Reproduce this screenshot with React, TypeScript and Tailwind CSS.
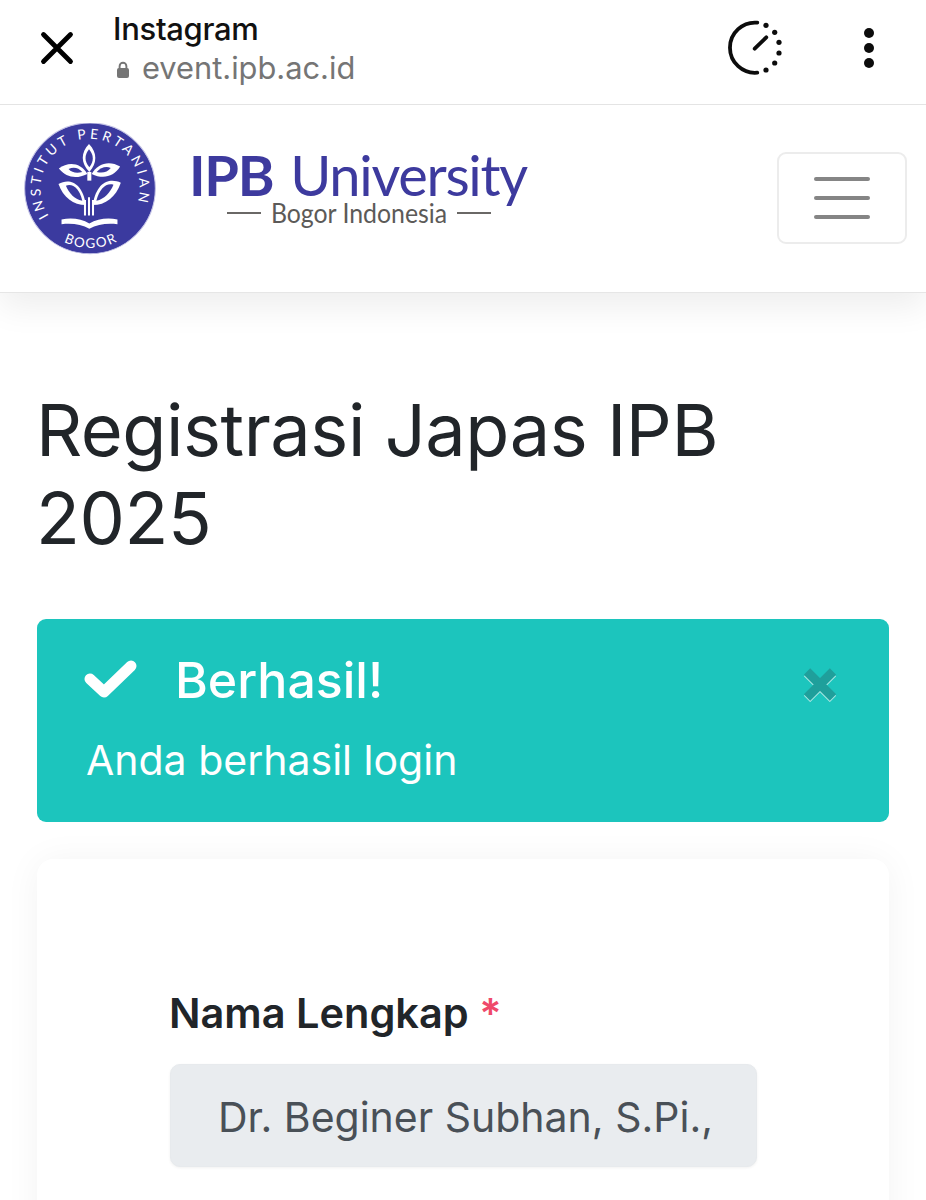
import React from 'react'

function Emblem() {
  return (
    <svg width="134" height="134" viewBox="40 40 400 400" className="shrink-0 -mt-[17px]">
      <defs>
        <path id="topArc" d="M 117 317 A 148 148 0 1 1 366 313" />
        <path id="bottomArc" d="M 158 393 A 178 178 0 0 0 322 393" />
      </defs>
      <circle cx="240" cy="235" r="195" fill="#3b3a9f" stroke="#c4c3e6" strokeWidth="3" />
      <text fill="#fff" fontFamily="Lato, sans-serif" fontSize="41" letterSpacing="10.5">
        <textPath href="#topArc">INSTITUT PERTANIAN</textPath>
      </text>
      <text fill="#fff" fontFamily="Lato, sans-serif" fontSize="40" letterSpacing="5">
        <textPath href="#bottomArc" startOffset="4">BOGOR</textPath>
      </text>
      {/* top leaf */}
      <path d="M237 103 C262 128 262 160 238 186 C212 160 212 128 237 103Z" fill="#fff" />
      <path d="M237 118 C252 136 252 154 238 172 C223 154 223 136 237 118Z" fill="#3b3a9f" />
      {/* middle leaves */}
      <path d="M147 176 C175 155 212 158 232 192 C200 208 170 204 147 176Z" fill="#fff" />
      <path d="M176 177 C192 170 206 174 217 186 C200 191 186 188 176 177Z" fill="#3b3a9f" />
      <path d="M330 170 C300 152 264 158 245 192 C278 208 310 202 330 170Z" fill="#fff" />
      <path d="M302 174 C286 168 272 174 260 186 C278 191 292 186 302 174Z" fill="#3b3a9f" />
      {/* lower leaves */}
      <path d="M146 222 C175 205 216 212 228 285 C190 285 160 262 146 222Z" fill="#fff" />
      <path d="M168 227 C190 220 208 236 217 272 C192 266 178 250 168 227Z" fill="#3b3a9f" />
      <path d="M332 218 C300 204 260 212 248 285 C286 285 318 260 332 218Z" fill="#fff" />
      <path d="M310 224 C288 218 268 236 259 272 C284 266 300 248 310 224Z" fill="#3b3a9f" />
      {/* stem */}
      <path d="M232 186 H244 V212 H232Z" fill="#fff" />
      <path d="M222 270 H228 V316 H222Z M234 262 H240 V316 H234Z M246 270 H252 V316 H246Z" fill="#fff" />
      {/* book */}
      <path d="M155 328 C185 322 215 326 238 340 C262 326 292 322 322 328 V342 C292 338 262 342 238 356 C215 342 185 338 155 342Z" fill="#fff" />
    </svg>
  )
}

function Wordmark() {
  return (
    <div className="flex flex-col items-start w-[340px] font-['Lato',sans-serif]">
      <div className="flex text-[56px] leading-[52px] text-[#3d3a9e] whitespace-nowrap tracking-[-1.3px]">
        <span className="font-bold">IPB</span>
        <span className="ml-[17px]">University</span>
      </div>
      <div className="flex items-center gap-[11px] ml-[38px] -mt-[3px] text-[27px] leading-[30px] text-[#5c5a58] whitespace-nowrap">
        <div className="w-[34px] h-[2px] bg-[#6a6866]" />
        <span className="scale-x-[0.92] w-[174px] flex justify-center">Bogor Indonesia</span>
        <div className="w-[34px] h-[2px] bg-[#6a6866]" />
      </div>
    </div>
  )
}

function App() {
  return (
    <div className="w-[926px] h-[1200px] overflow-hidden bg-white font-['Inter',sans-serif] text-[#212529]">
      {/* in-app browser bar */}
      <div className="flex items-center h-[105px] pb-[8px] border-b border-[#e4e4e4] bg-white relative z-20">
        <svg width="34" height="34" viewBox="0 0 34 34" className="ml-[40px] shrink-0">
          <path d="M3.5 3.5 L30.5 30.5 M30.5 3.5 L3.5 30.5" stroke="#000" strokeWidth="4.8" strokeLinecap="round" />
        </svg>
        <div className="ml-[39px] flex flex-col w-[400px] mt-[1px]">
          <span className="text-[31px] leading-[36px] font-medium text-[#111] tracking-[-0.3px]">Instagram</span>
          <div className="flex items-center gap-[12px] mt-[3px]">
            <svg width="14" height="18" viewBox="0 0 14 18" className="mt-[3px] ml-[3px]">
              <path d="M3.6 8 V5.2 a3.4 3.4 0 0 1 6.8 0 V8" fill="none" stroke="#757575" strokeWidth="1.9" />
              <rect x="1" y="7" width="12" height="10" rx="2" fill="#757575" />
            </svg>
            <span className="text-[30.8px] leading-[36px] text-[#757575]">event.ipb.ac.id</span>
          </div>
        </div>
        <svg width="66" height="66" viewBox="0 0 66 66" className="ml-auto shrink-0">
          <path d="M33.3 7.7 A25.1 25.1 0 1 0 33.3 57.7" fill="none" stroke="#0c0c0c" strokeWidth="3.8" strokeLinecap="round" />
          <path d="M30.7 33.7 L42.3 22.3" stroke="#0c0c0c" strokeWidth="3.8" strokeLinecap="round" />
          <circle cx="42" cy="10.3" r="2.6" fill="#0c0c0c" />
          <circle cx="50.7" cy="17.3" r="2.6" fill="#0c0c0c" />
          <circle cx="55" cy="27.3" r="2.6" fill="#0c0c0c" />
          <circle cx="55" cy="38" r="2.6" fill="#0c0c0c" />
          <circle cx="50.7" cy="48" r="2.6" fill="#0c0c0c" />
          <circle cx="42" cy="55" r="2.6" fill="#0c0c0c" />
        </svg>
        <div className="ml-[74px] mr-[52px] flex flex-col gap-[5px] shrink-0">
          <div className="w-[10px] h-[10px] rounded-full bg-[#0c0c0c]" />
          <div className="w-[10px] h-[10px] rounded-full bg-[#0c0c0c]" />
          <div className="w-[10px] h-[10px] rounded-full bg-[#0c0c0c]" />
        </div>
      </div>

      {/* navbar */}
      <div className="flex items-center h-[188px] pl-[23px] pr-[19px] border-b border-[#e6e6e6] bg-white shadow-[0_14px_32px_rgba(0,0,0,0.07)] relative z-10">
        <Emblem />
        <div className="ml-[32px] -mt-[20px]">
          <Wordmark />
        </div>
        <button className="ml-auto w-[130px] h-[92px] -mt-[1px] border-2 border-[#ececec] rounded-[9px] flex flex-col items-center justify-center gap-[15px] bg-white">
          <div className="w-[56px] h-[4px] rounded-full bg-[#858585]" />
          <div className="w-[56px] h-[4px] rounded-full bg-[#858585]" />
          <div className="w-[56px] h-[4px] rounded-full bg-[#858585]" />
        </button>
      </div>

      {/* content */}
      <div className="px-[37px] pt-[93px]">
        <h1 className="text-[72px] leading-[88px] font-normal tracking-[-0.45px] -ml-[1px] text-[#212529]">
          Registrasi Japas IPB 2025
        </h1>

        <div className="relative mt-[57px] h-[203px] rounded-[9px] bg-[#1cc5bd] text-white pl-[50px] pt-[30px]">
          <div className="flex items-center">
            <svg width="54" height="40" viewBox="0 0 54 40" className="-ml-[3px] shrink-0">
              <path d="M6 19 L20 32 L47 6" fill="none" stroke="#fff" strokeWidth="11" strokeLinecap="round" strokeLinejoin="round" />
            </svg>
            <span className="ml-[37px] text-[50px] leading-[62px] font-medium">Berhasil!</span>
          </div>
          <p className="mt-[25px] text-[41px] leading-[48px] font-normal -ml-[1px]">Anda berhasil login</p>
          <svg width="34" height="34" viewBox="0 0 34 34" className="absolute right-[52px] top-[49px]">
            <path d="M4 5 L30 31 M30 5 L4 31" stroke="#a5e6e2" strokeWidth="9" />
            <path d="M4 3.5 L30 29.5 M30 3.5 L4 29.5" stroke="#1f9f9b" strokeWidth="9" />
          </svg>
        </div>

        <div className="mt-[37px] h-[500px] rounded-[16px] bg-white shadow-[0_2px_36px_rgba(0,0,0,0.05)] pt-[130px] pl-[133px]">
          <label className="block text-[41.5px] leading-[48px] font-semibold text-[#212529] -ml-[1px]">
            Nama Lengkap <span className="text-[#ef4a6b]">*</span>
          </label>
          <div className="mt-[27px] w-[587px] h-[103px] rounded-[10px] bg-[#e9ecef] border border-[#e7eaed] shadow-[0_1px_3px_rgba(0,0,0,0.06)] pl-[47px] pt-[2px] flex items-center overflow-hidden">
            <span className="text-[41px] leading-[48px] text-[#495057] whitespace-nowrap">Dr. Beginer Subhan, S.Pi.,</span>
          </div>
        </div>
      </div>
    </div>
  )
}

export default App
